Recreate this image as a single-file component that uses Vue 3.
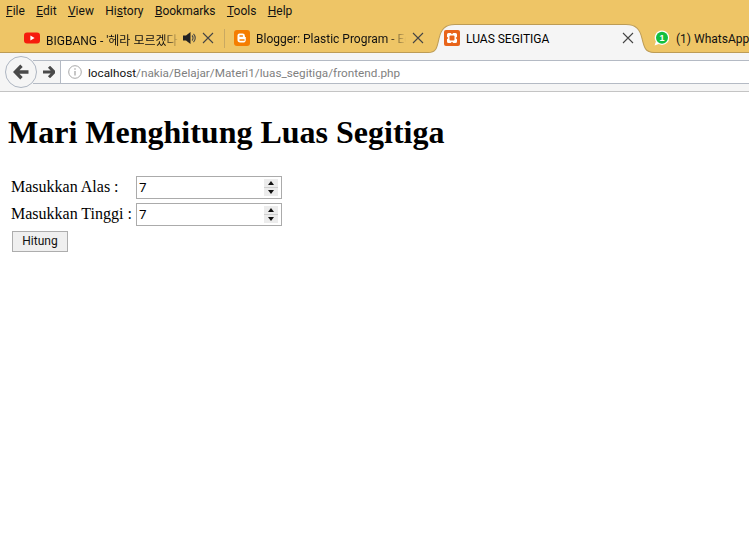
<script setup>
const menus = [
  { pre: '', key: 'F', post: 'ile' },
  { pre: '', key: 'E', post: 'dit' },
  { pre: '', key: 'V', post: 'iew' },
  { pre: 'Hi', key: 's', post: 'tory' },
  { pre: '', key: 'B', post: 'ookmarks' },
  { pre: '', key: 'T', post: 'ools' },
  { pre: '', key: 'H', post: 'elp' }
]
const rows = [
  { label: 'Masukkan Alas :', value: '7' },
  { label: 'Masukkan Tinggi :', value: '7' }
]
</script>

<template>
  <div class="browser">
    <nav class="menubar">
      <span v-for="m in menus" :key="m.post" class="menu">{{ m.pre }}<u>{{ m.key }}</u>{{ m.post }}</span>
    </nav>

    <div class="tabstrip">
      <div class="tab yt">
        <svg class="fav" viewBox="0 0 16 16"><rect x="0" y="2.5" width="16" height="11" rx="3" fill="#f61c0d"/><path d="M6.4 5.6v4.8l4.2-2.4z" fill="#fff"/></svg>
        <span class="title fade">BIGBANG - '헤라 모르겠다</span>
        <svg class="speaker" viewBox="0 0 14 14"><path d="M0 4.500h3L7.500 1v12L3 9.500H0z" fill="#222"/><path d="M9 4.500a3.500 3.500 0 0 1 0 5M10.500 2.800a6 6 0 0 1 0 8.400" fill="none" stroke="#444" stroke-width="1.100"/></svg>
        <svg class="close" viewBox="0 0 12 12"><path d="M1 1l10 10M11 1L1 11" stroke="#444" stroke-width="1.100"/></svg>
      </div>
      <div class="tab blogger">
        <svg class="fav" viewBox="0 0 16 16"><rect width="16" height="16" rx="3" fill="#f57d00"/><path d="M5.500 3.500h3a2.400 2.400 0 0 1 2.400 2.400v.6c0 .4.3.6.7.6h.2v2.600A2.800 2.800 0 0 1 9 12.500H6.200a2.800 2.800 0 0 1-2.700-2.800V5.500a2 2 0 0 1 2-2z" fill="#fff"/><path d="M6 5.900h2.400M6 9.900h4" stroke="#f57d00" stroke-width="1.500" stroke-linecap="round"/></svg>
        <span class="title fade">Blogger: Plastic Program - Edit</span>
        <svg class="close" viewBox="0 0 12 12"><path d="M1 1l10 10M11 1L1 11" stroke="#444" stroke-width="1.100"/></svg>
      </div>
      <div class="tab active">
        <svg class="shape" viewBox="0 0 226 28" preserveAspectRatio="none"><path d="M0 27.500C9 27.500 9 22 11 14 13 5 17 .5 27 .5H198C208 .5 212 5 214 14 216 22 217 27.500 226 27.500V28H0z" fill="#f5f5f5"/><path d="M0 27.500C9 27.500 9 22 11 14 13 5 17 .5 27 .5H198C208 .5 212 5 214 14 216 22 217 27.500 226 27.500" fill="none" stroke="#bd9c55"/></svg>
        <svg class="fav" viewBox="0 0 16 16"><rect width="16" height="16" rx="2" fill="#e8641b"/><path d="M4.500 3h2.200L8 4.300 9.300 3h2.200A1.500 1.500 0 0 1 13 4.500v2.200L11.700 8 13 9.300v2.200a1.500 1.500 0 0 1-1.500 1.500H9.300L8 11.700 6.700 13H4.500A1.500 1.500 0 0 1 3 11.500V9.300L4.300 8 3 6.700V4.500A1.500 1.500 0 0 1 4.500 3z" fill="#fff"/><rect x="5.500" y="5.500" width="5" height="5" rx="1" fill="#e8641b"/></svg>
        <span class="title">LUAS SEGITIGA</span>
        <svg class="close" viewBox="0 0 12 12"><path d="M1 1l10 10M11 1L1 11" stroke="#444" stroke-width="1.100"/></svg>
      </div>
      <div class="tab wa">
        <svg class="fav" viewBox="0 0 16 16"><path d="M8 .5a7.200 7.200 0 0 1 0 14.400c-1.200 0-2.300-.3-3.300-.8L.6 15.500l1.300-3.900A7.200 7.200 0 0 1 8 .5z" fill="#fff"/><circle cx="8" cy="7.700" r="6" fill="#12bf3f"/><text x="8" y="11" text-anchor="middle" class="badge">1</text></svg>
        <span class="title">(1) WhatsApp</span>
      </div>
    </div>

    <div class="toolbar">
      <button class="back" aria-label="Back">
        <svg viewBox="0 0 16 16" width="16" height="16"><path d="M8.500 1.800 2.300 8l6.200 6.200M3 8h12.500" fill="none" stroke="#4a4a4a" stroke-width="3.400"/></svg>
      </button>
      <button class="forward" aria-label="Forward">
        <svg viewBox="0 0 12 12" width="12" height="12"><path d="M6 .8 11.200 6 6 11.200M10.500 6H0" fill="none" stroke="#4a4a4a" stroke-width="3"/></svg>
      </button>
      <div class="urlbar">
        <svg class="info" viewBox="0 0 14 14"><circle cx="7" cy="7" r="6.300" fill="none" stroke="#a8a8a8"/><path d="M7 6v4.500M7 3.300v1.400" stroke="#a8a8a8" stroke-width="1.300"/></svg>
        <span class="host">localhost</span><span class="path">/nakia/Belajar/Materi1/luas_segitiga/frontend.php</span>
      </div>
    </div>

    <main class="page">
      <h1>Mari Menghitung Luas Segitiga</h1>
      <form @submit.prevent>
        <table>
          <tbody>
            <tr v-for="r in rows" :key="r.label">
              <td>{{ r.label }}</td>
              <td>
                <span class="num">
                  <input type="text" :value="r.value" />
                  <span class="spin">
                    <span class="sbtn"><i class="up"></i></span>
                    <span class="sbtn"><i class="down"></i></span>
                  </span>
                </span>
              </td>
            </tr>
            <tr>
              <td colspan="2"><button class="submit" type="submit">Hitung</button></td>
            </tr>
          </tbody>
        </table>
      </form>
    </main>
  </div>
</template>

<style>
html, body { margin: 0; background: #fff; }
</style>

<style scoped>
.browser { width: 749px; height: 542px; overflow: hidden; background: #fff; font-family: Roboto, "Noto Sans CJK KR", sans-serif; }
.menubar { height: 24px; background: #eec566; display: flex; align-items: center; gap: 11.4px; padding: 0 6px 3px; font-size: 12px; color: #111; box-sizing: border-box; }
.tabstrip { height: 28px; background: #eec566; border-bottom: 1px solid #bd9c55; display: flex; padding-left: 14px; font-size: 12px; color: #111; }
.tab { height: 28px; box-sizing: border-box; display: flex; align-items: center; position: relative; flex: none; }
.fav { width: 16px; height: 16px; flex: none; position: relative; }
.title { margin-left: 6px; margin-top: 2px; white-space: nowrap; overflow: hidden; position: relative; }
.fade { -webkit-mask-image: linear-gradient(to right, #000 88%, transparent); mask-image: linear-gradient(to right, #000 88%, transparent); }
.close { width: 12px; height: 12px; flex: none; position: relative; }
.speaker { width: 14px; height: 14px; flex: none; margin-left: 3px; }
.yt { width: 210px; padding: 0 10px; }
.yt .title { width: 134px; }
.yt .close { margin-left: 5px; }
.yt::after { content: ""; position: absolute; right: -1px; top: 5px; height: 19px; width: 1px; background: #c9a962; }
.blogger { width: 204px; padding-left: 10px; }
.blogger .title { width: 150px; }
.blogger .close { margin-left: 6px; }
.active { width: 226px; padding-left: 16px; z-index: 1; }
.active .title { width: 150px; color: #000; }
.active .close { margin-left: 6px; }
.shape { position: absolute; left: 0; top: 0; width: 226px; height: 29px; }
.wa { z-index: 2; }
.badge { font: bold 9px "Liberation Sans", sans-serif; fill: #fff; }

.toolbar { height: 38px; background: #f5f5f5; border-bottom: 1px solid #c4c4c4; display: flex; align-items: center; padding-left: 5px; }
.back { width: 32px; height: 32px; box-sizing: border-box; border-radius: 50%; border: 1px solid #aeb6c2; background: #f5f5f5; display: flex; align-items: center; justify-content: center; padding: 0; flex: none; position: relative; z-index: 1; }
.forward { width: 28px; height: 24px; margin-left: -4px; box-sizing: border-box; border: 1px solid #b4bac4; border-left: 0; background: #f5f5f5; display: flex; align-items: center; justify-content: center; padding: 0 0 0 4px; flex: none; }
.urlbar { flex: 1; height: 24px; box-sizing: border-box; background: #fff; border-top: 1px solid #b4bac4; border-bottom: 1px solid #b4bac4; display: flex; align-items: center; font-size: 11.75px; padding-left: 7px; }
.info { width: 14px; height: 14px; margin-right: 6px; flex: none; }
.host { color: #111; margin-top: 2px; }
.path { color: #7f7f7f; margin-top: 2px; }

.page { font-family: "Liberation Serif", serif; color: #000; padding: 1px 8px 0; }
h1 { font-size: 32px; font-weight: bold; margin: 21.44px 0; }
table { border-spacing: 2px; font-size: 16px; }
td { padding: 1px; }
.num { position: relative; display: block; width: 146px; height: 23px; }
input { display: block; width: 146px; height: 23px; box-sizing: border-box; border: 1px solid #ababab; padding: 1px 2px; outline: 0; background: #fff; font: 13.3px "Noto Sans", sans-serif; color: #000; }
.spin { position: absolute; right: 4px; top: 3px; width: 14px; height: 17px; display: flex; flex-direction: column; gap: 1px; background: #cfcfcf; }
.sbtn { flex: 1; background: #ececec; display: flex; align-items: center; justify-content: center; }
.sbtn i { display: block; width: 0; height: 0; border-left: 3.500px solid transparent; border-right: 3.500px solid transparent; }
.up { border-bottom: 4px solid #111; }
.down { border-top: 4px solid #111; }
.submit { display: block; margin: 1px 0 0 1px; width: 56px; height: 21px; box-sizing: border-box; border: 1px solid #adadad; background: #efefef; padding: 0; font: 12px Roboto, sans-serif; color: #111; }
</style>
